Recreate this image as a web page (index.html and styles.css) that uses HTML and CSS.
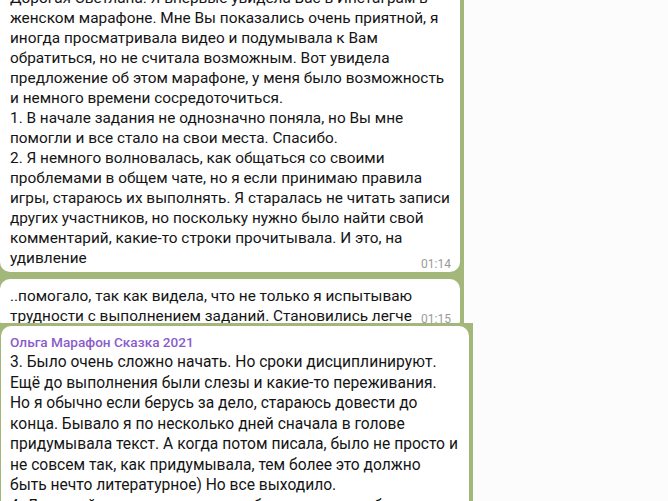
FILE: index.html
```html
<!DOCTYPE html>
<html lang="ru">
<head>
  <meta charset="UTF-8" />
  <meta name="viewport" content="width=device-width, initial-scale=1.0" />
  <title>Отзывы</title>
  <link rel="stylesheet" href="styles.css">
</head>
<body>

  <div class="chat chat-first">
    <div class="bubble bubble-top">
      <p>Дорогая Светлана! Я впервые увидела Вас в Инстаграм в женском марафоне. Мне Вы показались очень приятной, я иногда просматривала видео и подумывала к Вам обратиться, но не считала возможным. Вот увидела предложение об этом марафоне, у меня было возможность и немного времени сосредоточиться.<br>1. В начале задания не однозначно поняла, но Вы мне помогли и все стало на свои места. Спасибо.<br>2. Я немного волновалась, как общаться со своими проблемами в общем чате, но я если принимаю правила игры, стараюсь их выполнять. Я старалась не читать записи других участников, но поскольку нужно было найти свой комментарий, какие-то строки прочитывала. И это, на удивление<span class="time">01:14</span></p>
    </div>
    <div class="bubble">
      <p>..помогало, так как видела, что не только я испытываю трудности с выполнением заданий. Становились легче<span class="time time-low">01:15</span></p>
    </div>
  </div>

  <div class="chat chat-second">
    <div class="bubble bubble-big">
      <div class="author">Ольга Марафон Сказка 2021</div>
      <p>3. Было очень сложно начать. Но сроки дисциплинируют.<br>Ещё до выполнения были слезы и какие-то переживания.<br>Но я обычно если берусь за дело, стараюсь довести до<br>конца. Бывало я по несколько дней сначала в голове<br>придумывала текст. А когда потом писала, было не просто и<br>не совсем так, как придумывала, тем более это должно<br>быть нечто литературное) Но все выходило.<br>4. Даже сейчас мне сложно подобрать слова, чтобы</p>
    </div>
  </div>

</body>
</html>
```

FILE: styles.css
```css
body {
  margin: 0;
  background: #fcfcfc;
  font-family: 'Roboto', 'Liberation Sans', sans-serif;
  color: #141414;
  height: 501px;
  overflow: hidden;
}

.chat {
  background: #a3b77b;
}

.chat-first {
  width: 464px;
  height: 323px;
  overflow: hidden;
}

.chat-second {
  width: 473px;
  padding: 3px 0 0 1px;
  box-sizing: border-box;
}

.bubble {
  background: #fff;
  border-radius: 10px;
  margin-right: 4px;
  padding: 7px 10px 4px;
  margin-bottom: 7px;
}

.bubble-top {
  margin-top: -19px;
  border-top-left-radius: 0;
  border-top-right-radius: 0;
}

.bubble p {
  margin: 0;
  font-size: 15.36px;
  line-height: 20px;
}

.time {
  float: right;
  font-size: 12px;
  line-height: 14px;
  color: #9a9a9a;
  margin-top: 9px;
  margin-left: 6px;
  margin-right: -1px;
}

.time-low {
  margin-top: 6px;
}

.bubble-big {
  padding: 6px 8px 6px 9px;
}

.bubble-big p {
  font-size: 15.6px;
  line-height: 20.5px;
  white-space: nowrap;
}

.author {
  color: #8b5ccc;
  font-size: 13.6px;
  font-weight: 500;
  line-height: 20px;
}
```
